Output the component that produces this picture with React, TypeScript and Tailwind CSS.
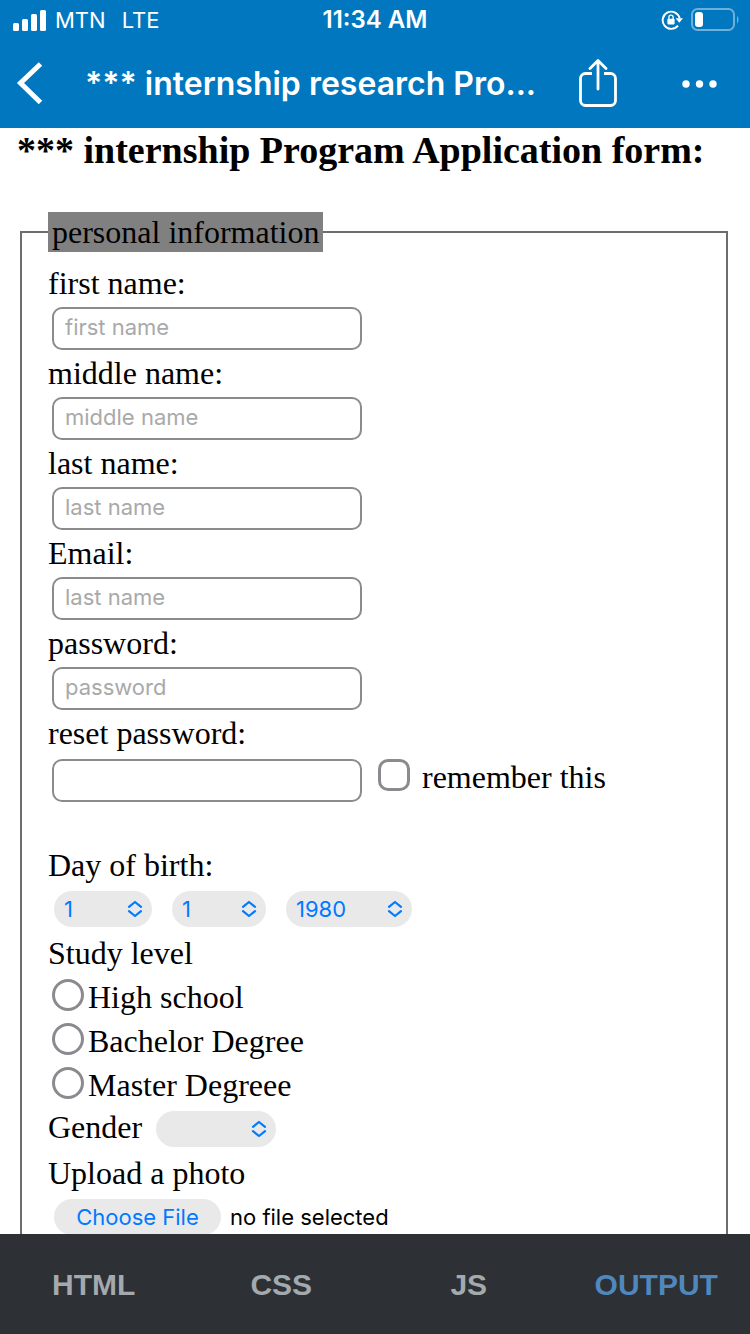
import React from 'react';

const fields = [
  { id: 'first-name', label: 'first name:', placeholder: 'first name', type: 'text' },
  { id: 'middle-name', label: 'middle name:', placeholder: 'middle name', type: 'text' },
  { id: 'last-name', label: 'last name:', placeholder: 'last name', type: 'text' },
  { id: 'email', label: 'Email:', placeholder: 'last name', type: 'email' },
  { id: 'password', label: 'password:', placeholder: 'password', type: 'password' },
];

const levels = ['High school', 'Bachelor Degree', 'Master Degreee'];
const days = Array.from({ length: 31 }, (_, i) => String(i + 1));
const months = Array.from({ length: 12 }, (_, i) => String(i + 1));
const years = Array.from({ length: 40 }, (_, i) => String(1980 + i));

const inputClass =
  "block h-[43px] w-[310px] rounded-[10px] border-2 border-[#8a8a8f] bg-white px-[11px] pb-1 font-['Inter',sans-serif] text-[22px] text-black outline-none placeholder:text-[#a9a9a9]";

function Picker({ label, options, width }: { label: string; options: string[]; width: string }) {
  return (
    <span className={`relative block h-9 ${width}`}>
      <select
        aria-label={label}
        className="block size-full appearance-none rounded-full bg-[#e9e9e9] px-[10px] font-['Inter',sans-serif] text-[22px] leading-9 text-[#007aff] outline-none"
      >
        {options.map((o) => (
          <option key={o}>{o}</option>
        ))}
      </select>
      <svg
        className="pointer-events-none absolute right-[9px] top-[9px]"
        width="16"
        height="18"
        viewBox="0 0 16 18"
        fill="none"
        stroke="#007aff"
        strokeWidth="2.2"
        strokeLinecap="round"
        strokeLinejoin="round"
        aria-hidden="true"
      >
        <path d="M2 6.8 8 2l6 4.8M2 11.2 8 16l6-4.8" />
      </svg>
    </span>
  );
}

function StatusBar() {
  return (
    <div className="grid h-10 grid-cols-[1fr_auto_1fr] items-center px-[11px] text-[22px]">
      <div className="flex items-center gap-2 pl-[2px]">
        <svg width="34" height="22" viewBox="0 0 34 22" fill="#fff" aria-hidden="true">
          <rect x="0" y="14" width="6" height="8" rx="1.5" />
          <rect x="9" y="10" width="6" height="12" rx="1.5" />
          <rect x="18" y="5" width="6" height="17" rx="1.5" />
          <rect x="27" y="1" width="6" height="21" rx="1.5" />
        </svg>
        <span>MTN</span>
        <span className="pl-2">LTE</span>
      </div>
      <span className="text-2xl font-semibold">11:34 AM</span>
      <div className="flex items-center justify-end gap-2">
        <svg width="22" height="22" viewBox="0 0 22 22" fill="none" aria-hidden="true">
          <path d="M17 16.6A8.600 8.600 0 1 1 18.700 9.500" stroke="#fff" strokeWidth="1.9" />
          <path d="M14.600 9.200h7.400l-3.700 4.600z" fill="#fff" />
          <rect x="6.4" y="9.8" width="7.2" height="5.6" rx="0.8" fill="#fff" />
          <path d="M7.900 10V8.300a2.100 2.100 0 0 1 4.200 0V10" stroke="#fff" strokeWidth="1.3" />
        </svg>
        <svg width="48" height="24" viewBox="0 0 48 24" fill="none" aria-hidden="true">
          <rect x="1" y="1" width="42" height="21" rx="5.5" stroke="#6eb0dc" strokeWidth="2" />
          <rect x="4" y="4" width="8" height="15" rx="3" fill="#fff" />
          <path d="M46 8c2 1.500 2 6 0 7.500z" fill="#6eb0dc" />
        </svg>
      </div>
    </div>
  );
}

function NavBar() {
  return (
    <div className="flex h-[88px] items-center pl-[16px] pr-[30px]">
      <button type="button" aria-label="Back" className="shrink-0">
        <svg width="28" height="44" viewBox="0 0 28 44" fill="none" stroke="#fff" strokeWidth="5">
          <path d="M24.500 2 4.500 21l20 19.500" />
        </svg>
      </button>
      <h1 className="min-w-0 flex-1 truncate pl-[41px] text-[32px] font-semibold">
        *** internship research Pro...
      </h1>
      <button type="button" aria-label="Share" className="shrink-0">
        <svg
          width="40"
          height="50"
          viewBox="0 0 40 50"
          fill="none"
          stroke="#fff"
          strokeWidth="2.800"
          strokeLinecap="round"
          strokeLinejoin="round"
        >
          <path
            strokeLinecap="butt"
            d="M14 14.500H7.500a5 5 0 0 0-5 5v22a5 5 0 0 0 5 5h25a5 5 0 0 0 5-5v-22a5 5 0 0 0-5-5H26"
          />
          <path d="M20 30V2M12 9.500 20 1.600l8 7.900" />
        </svg>
      </button>
      <button type="button" aria-label="More" className="ml-[62px] shrink-0">
        <svg width="40" height="10" viewBox="0 0 40 10" fill="#fff">
          <circle cx="6" cy="5" r="3.700" />
          <circle cx="19.500" cy="5" r="3.700" />
          <circle cx="33" cy="5" r="3.700" />
        </svg>
      </button>
    </div>
  );
}

export default function App() {
  return (
    <div className="flex h-screen flex-col bg-white text-black">
      <header className="shrink-0 bg-[#0077be] font-['Inter',sans-serif] text-white">
        <StatusBar />
        <NavBar />
      </header>

      <main className="min-h-0 flex-1 overflow-y-auto font-['Liberation_Serif',serif] text-[32px] [scrollbar-width:none]">
        <h2 className="whitespace-nowrap pl-[17px] text-[38px] font-bold leading-[44px]">
          *** internship Program Application form:
        </h2>
        <form>
          <fieldset className="ml-5 mr-[22px] mt-10 border-2 border-[#6d6d70] pb-6 pl-[26px]">
            <legend className="bg-[#808080] px-1 leading-10">personal information</legend>

            <div className="pt-2">
              {fields.map((f) => (
                <div key={f.id}>
                  <label htmlFor={f.id} className="block leading-[47px]">
                    {f.label}
                  </label>
                  <div className="pl-1">
                    <input id={f.id} type={f.type} placeholder={f.placeholder} className={inputClass} />
                  </div>
                </div>
              ))}
              <label htmlFor="reset" className="block pb-[2px] leading-[47px]">
                reset password:
              </label>
              <div className="flex items-start pl-1">
                <input id="reset" type="password" className={inputClass} />
                <label className="ml-4 flex items-center gap-3 leading-9">
                  <input
                    type="checkbox"
                    className="mb-1 size-8 appearance-none rounded-[10px] border-3 border-[#8a8a8f] checked:bg-[#007aff]"
                  />
                  remember this
                </label>
              </div>
            </div>

            <div className="pt-[41px] leading-[44px]">
              <p>Day of birth:</p>
              <div className="flex h-11 items-center gap-5 pl-[6px]">
                <Picker label="Day" options={days} width="w-[98px]" />
                <Picker label="Month" options={months} width="w-[94px]" />
                <Picker label="Year" options={years} width="w-[126px]" />
              </div>

              <p>Study level</p>
              {levels.map((l) => (
                <label key={l} className="flex items-center gap-1 pl-1">
                  <input
                    type="radio"
                    name="level"
                    className="mb-1 size-8 appearance-none rounded-full border-3 border-[#8a8a8f] checked:bg-[#007aff]"
                  />
                  {l}
                </label>
              ))}

              <div className="flex h-11 items-center gap-[14px]">
                <span className="pb-1">Gender</span>
                <Picker label="Gender" options={['', 'male', 'female']} width="w-[120px]" />
              </div>

              <p>Upload a photo</p>
              <div className="flex h-11 items-center gap-[9px] pl-[6px] font-['Inter',sans-serif] text-[22px]">
                <label className="relative flex h-9 w-[167px] items-center justify-center rounded-full bg-[#e9e9e9] text-[#007aff]">
                  Choose File
                  <input type="file" className="sr-only" />
                </label>
                <span>no file selected</span>
              </div>
            </div>
          </fieldset>
        </form>
      </main>

      <nav className="grid h-[100px] shrink-0 grid-cols-4 items-center bg-[#2d3035] font-['Liberation_Sans',sans-serif] text-[30px] font-bold text-[#a3a9ac]">
        <button type="button">HTML</button>
        <button type="button">CSS</button>
        <button type="button">JS</button>
        <button type="button" className="text-[#5088bd]">OUTPUT</button>
      </nav>
    </div>
  );
}
